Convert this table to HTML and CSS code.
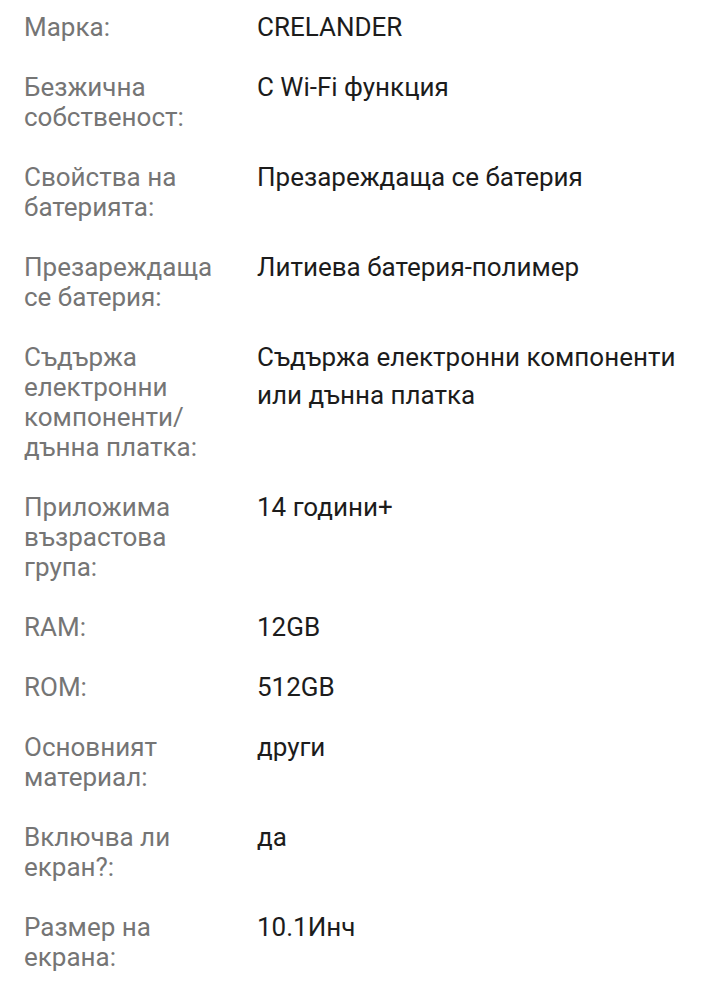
FILE: index.html
```html
<!DOCTYPE html>
<html lang="bg">
<head>
<meta charset="utf-8">
<link rel="stylesheet" href="styles.css">
</head>
<body>
<div class="specs">
  <div class="row"><div class="label">Марка:</div><div class="value">CRELANDER</div></div>
  <div class="row"><div class="label">Безжична собственост:</div><div class="value">С Wi-Fi функция</div></div>
  <div class="row"><div class="label">Свойства на батерията:</div><div class="value">Презареждаща се батерия</div></div>
  <div class="row"><div class="label">Презареждаща се батерия:</div><div class="value">Литиева батерия-полимер</div></div>
  <div class="row"><div class="label">Съдържа електронни компоненти/ дънна платка:</div><div class="value">Съдържа електронни компоненти или дънна платка</div></div>
  <div class="row"><div class="label">Приложима възрастова група:</div><div class="value">14 години+</div></div>
  <div class="row"><div class="label">RAM:</div><div class="value">12GB</div></div>
  <div class="row"><div class="label">ROM:</div><div class="value">512GB</div></div>
  <div class="row"><div class="label">Основният материал:</div><div class="value">други</div></div>
  <div class="row"><div class="label">Включва ли екран?:</div><div class="value">да</div></div>
  <div class="row"><div class="label">Размер на екрана:</div><div class="value">10.1Инч</div></div>
</div>
</body>
</html>
```
FILE: styles.css
```css
html, body {
  margin: 0;
  padding: 0;
  background: #ffffff;
}
body {
  font-family: Roboto, "Noto Sans", sans-serif;
  font-size: 26px;
}
.specs {
  display: flex;
  flex-direction: column;
  gap: 30px;
  padding: 12px 24px 0 24px;
}
.row {
  display: grid;
  grid-template-columns: 233px 1fr;
  align-items: start;
}
.label {
  color: #757575;
  line-height: 30px;
  padding-right: 30px;
}
.value {
  color: #1c1c1c;
  line-height: 38px;
  margin: -4px 0;
}
```
